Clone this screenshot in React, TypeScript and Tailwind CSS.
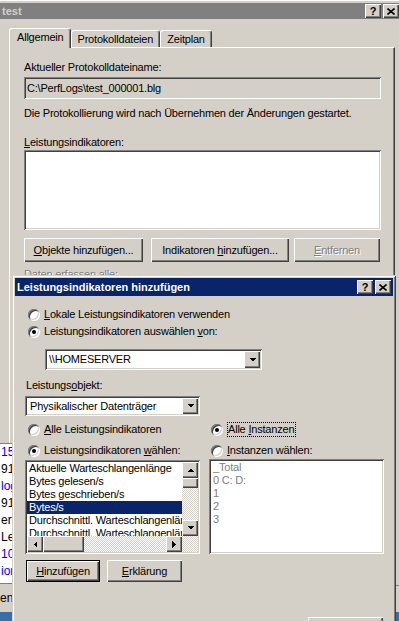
import React from 'react';

// classic 3D edges
const frame = 'shadow-[inset_1px_1px_#d4d0c8,inset_-1px_-1px_#404040,inset_2px_2px_#ffffff,inset_-2px_-2px_#808080]';
const raised = 'shadow-[inset_1px_1px_#ffffff,inset_-1px_-1px_#404040,inset_-2px_-2px_#808080]';
const sunken = 'shadow-[inset_1px_1px_#808080,inset_-1px_-1px_#ffffff,inset_2px_2px_#404040,inset_-2px_-2px_#d4d0c8]';
const dither = 'bg-[conic-gradient(#ffffff_25%,#d4d0c8_0_50%,#ffffff_0_75%,#d4d0c8_0)] bg-[length:2px_2px]';
const disabledText = 'text-[#808080] [text-shadow:1px_1px_#ffffff]';

type Dir = 'up' | 'down' | 'left' | 'right';

const Arrow = ({ dir }: { dir: Dir }) => {
  const vertical = dir === 'up' || dir === 'down';
  const points = {
    up: '0,4 7,4 3.5,0.5',
    down: '0,0 7,0 3.5,3.5',
    left: '4,0 4,7 0.5,3.5',
    right: '0,0 0,7 3.5,3.5',
  }[dir];
  return (
    <svg width={vertical ? 7 : 4} height={vertical ? 4 : 7} shapeRendering="crispEdges">
      <polygon points={points} fill="#000" />
    </svg>
  );
};

const ScrollBtn = ({ dir, className = '' }: { dir: Dir; className?: string }) => (
  <div className={`w-[16px] h-[16px] shrink-0 bg-[#d4d0c8] flex items-center justify-center ${raised} ${className}`}>
    <Arrow dir={dir} />
  </div>
);

const CaptionBtn = ({ kind }: { kind: 'help' | 'close' }) => (
  <div className={`w-[16px] h-[14px] bg-[#d4d0c8] flex items-center justify-center ${raised}`}>
    {kind === 'help' ? (
      <span className="font-bold text-[11px] leading-[11px] tracking-normal text-black">?</span>
    ) : (
      <svg width="8" height="7">
        <path d="M0.5 0.5 L7.5 6.5 M7.5 0.5 L0.5 6.5" stroke="#000" strokeWidth="1.6" />
      </svg>
    )}
  </div>
);

const Radio = ({ checked }: { checked?: boolean }) => (
  <span className={`w-[12px] h-[12px] rounded-full bg-white shrink-0 flex items-center justify-center ${sunken}`}>
    {checked && <span className="w-[4px] h-[4px] rounded-full bg-black" />}
  </span>
);

const Button = ({ children, w, h = 23, disabled, isDefault }: { children: React.ReactNode; w: number; h?: number; disabled?: boolean; isDefault?: boolean }) => (
  <div
    className={`shrink-0 bg-[#d4d0c8] flex items-center justify-center ${isDefault ? 'border border-black' : ''}`}
    style={{ width: w, height: h }}
  >
    <div className={`w-full h-full flex items-center justify-center ${raised} ${disabled ? disabledText : ''}`}>{children}</div>
  </div>
);

const Tab = ({ label, active }: { label: string; active?: boolean }) => (
  <div
    className={`bg-[#d4d0c8] border-t border-l border-white border-r border-r-[#404040] rounded-t-[3px] shadow-[inset_-1px_0_#808080] flex items-center px-[6px] ${
      active ? 'h-[20px] mb-[-1px] z-10 pl-[7px] pr-[6px] pb-[2px]' : 'h-[17px]'
    }`}
  >
    {label}
  </div>
);

const TestWindow = () => (
  <div className={`absolute left-[-4px] top-[-1px] w-[408px] h-[640px] bg-[#d4d0c8] p-[4px] ${frame}`}>
    <div className="h-[16px] bg-[#808080] flex items-center pl-[2px] pr-[1px]">
      <span className="font-bold text-[#d4d0c8] tracking-normal">test</span>
      <div className="ml-auto flex gap-[2px]">
        <CaptionBtn kind="help" />
        <CaptionBtn kind="close" />
      </div>
    </div>

    <div className="pl-[9px] pt-[9px]">
      <div className="flex items-end h-[19px]">
        <Tab label="Allgemein" active />
        <Tab label="Protokolldateien" />
        <Tab label="Zeitplan" />
      </div>

      <div className="w-[386px] h-[600px] border-t border-l border-white border-r border-r-[#404040] shadow-[inset_-1px_0_#808080] pl-[14px]">
        <div className="mt-[13px] h-[13px]">Aktueller Protokolldateiname:</div>
        <div className={`mt-[3px] w-[357px] h-[22px] flex items-center px-[3px] ${sunken}`}>C:\PerfLogs\test_000001.blg</div>
        <div className="mt-[8px] h-[13px] whitespace-nowrap">
          Die Protokollierung wird nach Übernehmen der Änderungen gestartet.
        </div>
        <div className="mt-[16px] h-[13px]">
          <u>L</u>eistungsindikatoren:
        </div>
        <div className={`mt-[1px] w-[357px] h-[80px] bg-white ${sunken}`} />
        <div className="mt-[8px] flex">
          <Button w={119} h={24}>
            <span><u>O</u>bjekte hinzufügen...</span>
          </Button>
          <div className="ml-[8px]">
            <Button w={138} h={24}>
              <span>Indikatoren <u>h</u>inzufügen...</span>
            </Button>
          </div>
          <div className="ml-[5px]">
            <Button w={86} h={24} disabled>
              <span><u>E</u>ntfernen</span>
            </Button>
          </div>
        </div>
        <div className={`mt-[6px] h-[13px] ${disabledText}`}>Daten erfassen alle:</div>
      </div>
    </div>
  </div>
);

// the console window that peeks out at the left
const ConsoleStrip = () => {
  const lines: [string, string][] = [
    ['15', 'text-[#0000ff]'],
    ['91', 'text-black'],
    ['log', 'text-[#0000ff]'],
    ['91', 'text-black'],
    ['erv', 'text-black'],
    ['Leb', 'text-black'],
    ['10', 'text-[#0000ff]'],
    ['ion', 'text-[#0000ff]'],
  ];
  return (
    <div className="absolute left-0 top-[443px] w-[12px] h-[178px] overflow-hidden bg-[#d4d0c8] tracking-normal">
      <div className="bg-white border-t border-[#808080] h-[140px]">
        {lines.map(([t, c], i) => (
          <div key={i} className={`h-[17px] flex items-center whitespace-nowrap pl-[1px] text-[12px] ${c}`}>
            {t}
          </div>
        ))}
      </div>
      <div className="border-t border-[#808080] h-[29px] pt-[8px] text-[12px] whitespace-nowrap">en</div>
      <div className="h-[9px] bg-[#3a6ea5]" />
    </div>
  );
};

const RightStrip = () => (
  <div className="absolute left-[396px] top-[585px] w-[3px] h-[36px] bg-[#d4d0c8] border-t border-[#808080]">
    <div className="mt-[26px] h-[10px] bg-[#3a6ea5]" />
  </div>
);

const counters = [
  'Aktuelle Warteschlangenlänge',
  'Bytes gelesen/s',
  'Bytes geschrieben/s',
  'Bytes/s',
  'Durchschnittl. Warteschlangenlänge',
  'Durchschnittl. Warteschlangenlänge für Lesevorgänge',
];

const instances = ['_Total', '0 C: D:', '1', '2', '3'];

const AddCountersDialog = () => (
  <div className={`absolute left-[12px] top-[275px] w-[384px] h-[360px] bg-[#d4d0c8] p-[3px] ${frame}`}>
    <div className="h-[18px] bg-[#0a246a] flex items-center pl-[2px] pr-[2px]">
      <span className="font-bold text-white tracking-normal">Leistungsindikatoren hinzufügen</span>
      <div className="ml-auto flex gap-[2px]">
        <CaptionBtn kind="help" />
        <CaptionBtn kind="close" />
      </div>
    </div>

    <div className="pl-[10px]">
      <div className="mt-[12px] h-[13px] pl-[3px] flex items-center gap-[4px]">
        <Radio />
        <span><u>L</u>okale Leistungsindikatoren verwenden</span>
      </div>
      <div className="mt-[4px] h-[13px] pl-[3px] flex items-center gap-[4px]">
        <Radio checked />
        <span>Leistungsindikatoren auswählen <u>v</u>on:</span>
      </div>

      <div className={`mt-[11px] ml-[20px] w-[217px] h-[21px] bg-white p-[2px] flex items-center ${sunken}`}>
        <span className="pl-[2px]">\\HOMESERVER</span>
        <ScrollBtn dir="down" className="ml-auto h-[17px]" />
      </div>

      <div className="mt-[9px] h-[13px] pl-[1px]">
        Leistungs<u>o</u>bjekt:
      </div>
      <div className={`mt-[4px] w-[175px] h-[20px] bg-white p-[2px] flex items-center ${sunken}`}>
        <span className="pl-[3px]">Physikalischer Datenträger</span>
        <ScrollBtn dir="down" className="ml-auto" />
      </div>

      <div className="flex gap-[9px]">
        {/* counters column */}
        <div className="w-[175px]">
          <div className="mt-[7px] h-[13px] pl-[3px] flex items-center gap-[4px]">
            <Radio />
            <span><u>A</u>lle Leistungsindikatoren</span>
          </div>
          <div className="mt-[8px] h-[13px] pl-[3px] flex items-center gap-[4px]">
            <Radio checked />
            <span>Leistungsindikatoren <u>w</u>ählen:</span>
          </div>
          <div className={`mt-[3px] w-[175px] h-[94px] bg-white p-[2px] ${sunken}`}>
            <div className="flex h-[74px]">
              <div className="w-[155px] overflow-hidden">
                {counters.map((c) => (
                  <div
                    key={c}
                    className={`h-[13px] leading-[13px] pl-[2px] whitespace-nowrap ${c === 'Bytes/s' ? 'bg-[#0a246a] text-white' : ''}`}
                  >
                    {c}
                  </div>
                ))}
              </div>
              <div className="w-[16px] flex flex-col">
                <ScrollBtn dir="up" />
                <div className={`flex-1 ${dither}`}>
                  <div className={`h-[10px] bg-[#d4d0c8] ${raised}`} />
                </div>
                <ScrollBtn dir="down" />
              </div>
            </div>
            <div className="flex h-[16px]">
              <ScrollBtn dir="left" />
              <div className={`flex-1 flex ${dither}`}>
                <div className={`w-[41px] h-full bg-[#d4d0c8] ${raised}`} />
              </div>
              <ScrollBtn dir="right" />
              <div className={`w-[16px] h-full ${dither}`} />
            </div>
          </div>
        </div>

        {/* instances column */}
        <div className="w-[175px]">
          <div className="mt-[6px] h-[15px] pl-[2px] flex items-center gap-[4px]">
            <Radio checked />
            <span className="border border-dotted border-black h-[15px] leading-[13px] pr-[1px]">
              Alle <u>I</u>nstanzen
            </span>
          </div>
          <div className="mt-[7px] h-[13px] pl-[2px] flex items-center gap-[4px]">
            <Radio />
            <span><u>I</u>nstanzen wählen:</span>
          </div>
          <div className={`mt-[2px] w-[175px] h-[95px] bg-white p-[2px] ${sunken}`}>
            {instances.map((t) => (
              <div key={t} className="h-[13px] leading-[13px] pl-[2px] text-[#808080]">
                {t}
              </div>
            ))}
          </div>
        </div>
      </div>

      <div className="mt-[6px] flex">
        <div className="ml-[1px]">
          <Button w={74} h={22} isDefault>
            <span><u>H</u>inzufügen</span>
          </Button>
        </div>
        <div className="ml-[7px]">
          <Button w={75} h={22}>
            <span><u>E</u>rklärung</span>
          </Button>
        </div>
      </div>

      <div className="mt-[35px] flex pr-[10px]">
        <div className="ml-auto">
          <Button w={75} h={23}>
            <span>Schließen</span>
          </Button>
        </div>
      </div>
    </div>
  </div>
);

export default function App() {
  return (
    <div className="relative w-[399px] h-[621px] overflow-hidden bg-[#3a6ea5] font-['Liberation_Sans',Arial,sans-serif] text-[11px] leading-[13px] tracking-[-0.2px] text-black">
      <TestWindow />
      <ConsoleStrip />
      <RightStrip />
      <AddCountersDialog />
    </div>
  );
}
